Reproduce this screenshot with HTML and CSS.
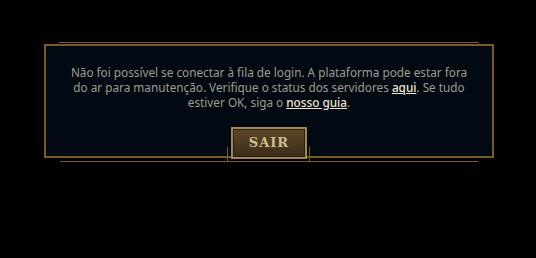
FILE: index.html
```html
<!DOCTYPE html>
<html lang="pt-BR">
<head>
<meta charset="utf-8">
<link rel="stylesheet" href="styles.css">
</head>
<body>
<div class="frame">
  <div class="panel">
    <p class="message">Não foi possível se conectar à fila de login. A plataforma pode estar fora do ar para manutenção. Verifique o status dos servidores <a class="link" href="#">aqui</a>. Se tudo estiver OK, siga o <a class="link" href="#">nosso guia</a>.</p>
    <div class="actions">
      <button class="btn" type="button"><span class="btn-label">SAIR</span></button>
    </div>
  </div>
</div>
</body>
</html>
```
FILE: styles.css
```css
html, body {
  margin: 0;
  padding: 0;
  background: #010101;
  width: 536px;
  height: 258px;
  overflow: hidden;
}
.frame {
  position: relative;
  width: 450px;
  margin: 44px 0 0 44px;
}
.frame::before,
.frame::after {
  content: "";
  position: absolute;
  left: 15px;
  right: 15px;
  height: 1px;
  background: #785a28;
}
.frame::before { top: -2px; }
.frame::after { bottom: -4px; left: 16px; right: 16px; }
.panel {
  box-sizing: border-box;
  width: 450px;
  height: 114px;
  border: 2px solid #785a28;
  background: #010a13;
  padding: 19px 20px 0;
  display: flex;
  flex-direction: column;
  align-items: center;
}
.message {
  margin: 0;
  font-family: "Noto Sans", sans-serif;
  font-size: 11.75px;
  line-height: 15px;
  color: #a09b8c;
  text-align: center;
}
.link {
  color: #f0e6d2;
  font-weight: 500;
  text-decoration: underline;
}
.actions {
  position: relative;
  margin-top: 17px;
}
.actions::before,
.actions::after {
  content: "";
  position: absolute;
  top: 20px;
  width: 1px;
  height: 14px;
  background: #785a28;
}
.actions::before { left: -4px; }
.actions::after { right: -3px; }
.btn {
  position: relative;
  box-sizing: border-box;
  width: 76px;
  height: 32px;
  padding: 0;
  border: 2px solid #a68548;
  background: #1e2328;
  cursor: pointer;
  display: flex;
}
.btn-label {
  flex: 1;
  margin: 1px;
  background: linear-gradient(#5c4727, #3b2d19);
  color: #cdbe91;
  font-family: "DejaVu Serif", serif;
  font-weight: bold;
  font-size: 13px;
  letter-spacing: 1px;
  line-height: 26px;
  text-align: center;
}
```
